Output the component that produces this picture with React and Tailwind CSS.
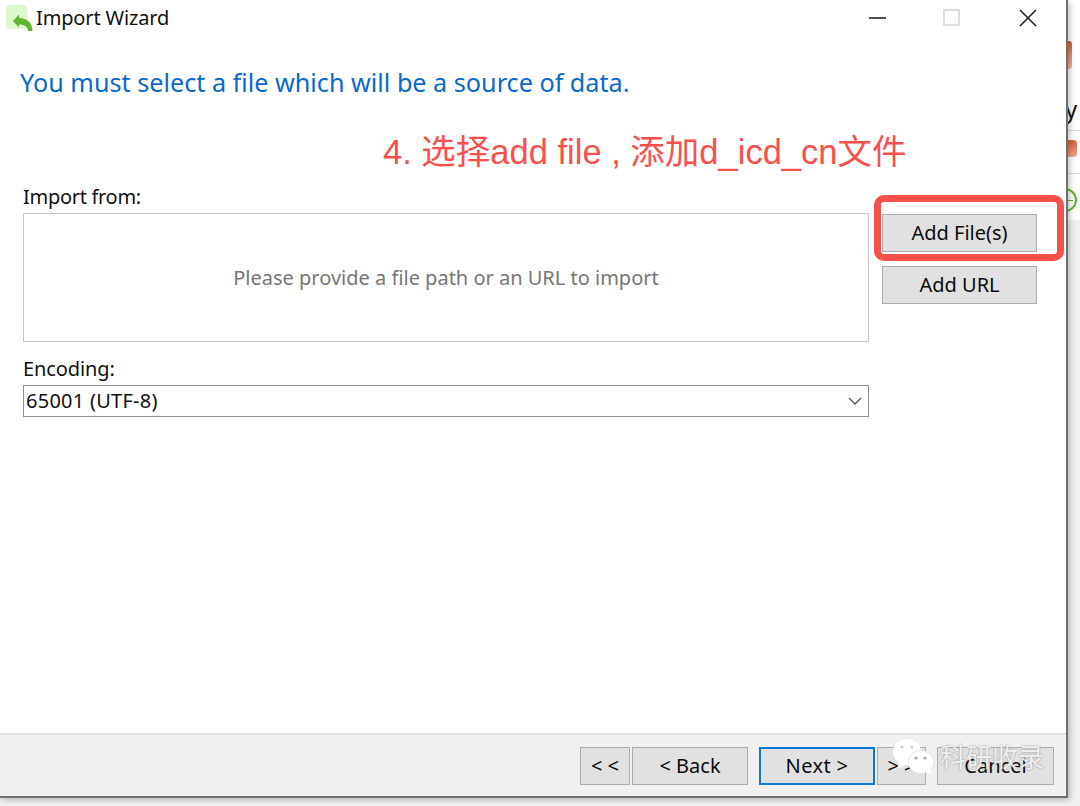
function Btn({ className = "", border = "border border-[#adadad]", children }) {
  return (
    <div className={"flex items-center justify-center bg-[#e1e1e1] text-[20px] leading-none text-[#0c0c0c] " + border + " " + className}>
      {children}
    </div>
  );
}

export default function App() {
  return (
    <div className="relative w-[1080px] h-[806px] overflow-hidden bg-[#f1f1f1] font-['Noto_Sans','Noto_Sans_CJK_SC',sans-serif]">
      {/* Background window behind the dialog */}
      <div className="absolute right-0 top-0 w-[14px] h-[220px] bg-white overflow-hidden">
        <div className="absolute left-0 top-[41px] w-[6px] h-[28px] rounded-sm bg-gradient-to-b from-[#cf5a36] to-[#f3b9a5]" />
        <div className="absolute left-[-1px] top-[96px] text-[24px] leading-[26px] text-[#111]">y</div>
        <div className="absolute left-0 right-0 top-[130px] h-px bg-[#dddddd]" />
        <div className="absolute left-0 top-[140px] w-[11px] h-[17px] rounded-sm bg-gradient-to-b from-[#dc5c38] to-[#f0a58d]" />
        <div className="absolute left-0 right-0 top-[173px] h-px bg-[#dddddd]" />
        <div className="absolute left-[-13px] top-[188px] w-[24px] h-[24px] rounded-full border-2 border-[#5fb82e]" />
        <div className="absolute left-[2px] top-[200px] w-[5px] h-px bg-[#5fb82e]" />
      </div>

      {/* Dialog */}
      <div className="relative w-[1068px] h-[798px] flex flex-col bg-white border-r-2 border-b-2 border-[#6f6f6f] shadow-[2px_2px_6px_rgba(0,0,0,0.25)]">
        {/* Title bar */}
        <div className="flex items-center h-[36px] shrink-0">
          <svg width="28" height="32" viewBox="0 0 28 32" className="ml-[6px]">
            <rect x="0" y="3" width="21" height="24" rx="4" fill="#dcf8cc" />
            <path d="M7 19 L13 12.5 L13 16 C21 16 26.5 21 26.5 29 L22 29 C22 25 19 22.5 13 22.5 L13 25.5 Z" fill="#5db52c" />
          </svg>
          <span className="ml-[2px] text-[20px] leading-none tracking-[-0.15px] text-[#111]">Import Wizard</span>
          <div className="ml-auto flex items-center h-full">
            <svg width="18" height="18" viewBox="0 0 18 18" className="mr-[56px]"><path d="M0 9 H17" stroke="#222" strokeWidth="1.6" /></svg>
            <svg width="18" height="18" viewBox="0 0 18 18" className="mr-[58px]"><rect x="1" y="1" width="15" height="15" fill="none" stroke="#d4d4d4" strokeWidth="1.6" /></svg>
            <svg width="18" height="18" viewBox="0 0 18 18" className="mr-[29px]"><path d="M1 1 L17 17 M17 1 L1 17" stroke="#222" strokeWidth="1.6" /></svg>
          </div>
        </div>

        {/* Body */}
        <div className="flex-1 flex flex-col pl-[20px]">
          <h1 className="mt-[28px] text-[25.2px] leading-[36px] font-normal text-[#0a69c9]">You must select a file which will be a source of data.</h1>
          <div className="mt-[30px] ml-[363px] text-[34.5px] leading-[44px] font-['Liberation_Sans','Noto_Sans_CJK_SC',sans-serif] text-[#f9504c]">4. 选择add file , 添加d_icd_cn文件</div>

          <div className="flex mt-[9px] pl-[3px]">
            <div className="w-[846px]">
              <div className="text-[20px] leading-[28px] tracking-[-0.3px] text-[#111]">Import from:</div>
              <div className="mt-[2px] h-[129px] flex items-center justify-center border border-[#c6c6c6] text-[20px] text-[#777]">
                Please provide a file path or an URL to import
              </div>
              <div className="mt-[13px] text-[20px] leading-[28px] tracking-[-0.1px] text-[#111]">Encoding:</div>
              <div className="mt-[2px] h-[32px] flex items-center border border-[#8f8f8f] px-[2px] text-[20px] tracking-[0.25px] text-[#111]">
                65001 (UTF-8)
                <svg width="14" height="8" viewBox="0 0 14 8" className="ml-auto mr-[4px]"><path d="M1 1 L7 7 L13 1" fill="none" stroke="#555" strokeWidth="1.3" /></svg>
              </div>
            </div>
            <div className="ml-[13px] mt-[31px] flex flex-col gap-[14px]">
              <Btn className="w-[155px] h-[38px]">Add File(s)</Btn>
              <Btn className="w-[155px] h-[38px]">Add URL</Btn>
            </div>
          </div>
        </div>

        {/* Footer */}
        <div className="h-[63px] shrink-0 flex items-center bg-[#f0f0f0] border-t-2 border-[#e2e2e2] pl-[580px]">
          <Btn className="w-[50px] h-[38px]">&lt; &lt;</Btn>
          <Btn className="ml-[2px] w-[116px] h-[38px]">&lt; Back</Btn>
          <Btn className="ml-[11px] w-[116px] h-[38px] tracking-[0.4px]" border="border-2 border-[#0a78d7]">Next &gt;</Btn>
          <Btn className="ml-[2px] w-[49px] h-[38px]">&gt; &gt;</Btn>
          <Btn className="ml-[11px] w-[117px] h-[38px]">Cancel</Btn>
        </div>
      </div>

      {/* Red annotation */}
      <div className="absolute left-[874px] top-[195px] w-[190px] h-[66px] rounded-[10px] border-[7px] border-[#f9504c]" />

      {/* Watermark */}
      <div className="absolute left-[891px] top-[737px] flex items-center">
        <svg width="45" height="40" viewBox="0 0 45 40">
          <ellipse cx="16" cy="15" rx="14" ry="13" fill="#ffffff" />
          <path d="M8 25 L7 32 L14 28 Z" fill="#ffffff" />
          <ellipse cx="30" cy="25" rx="13" ry="11.5" fill="#ffffff" stroke="#dddddd" strokeWidth="0.8" />
          <path d="M35 34 L40 38 L39 31 Z" fill="#ffffff" />
          <circle cx="11" cy="10" r="1.6" fill="#cfcfcf" />
          <circle cx="21" cy="10" r="1.6" fill="#cfcfcf" />
          <circle cx="25" cy="21" r="1.6" fill="#a8a8a8" />
          <circle cx="34" cy="21" r="1.6" fill="#a8a8a8" />
        </svg>
        <span className="ml-[4px] text-[26px] leading-none text-white/85 [text-shadow:0_0_2px_rgba(90,90,90,0.7)]">科研收录</span>
      </div>
    </div>
  );
}
